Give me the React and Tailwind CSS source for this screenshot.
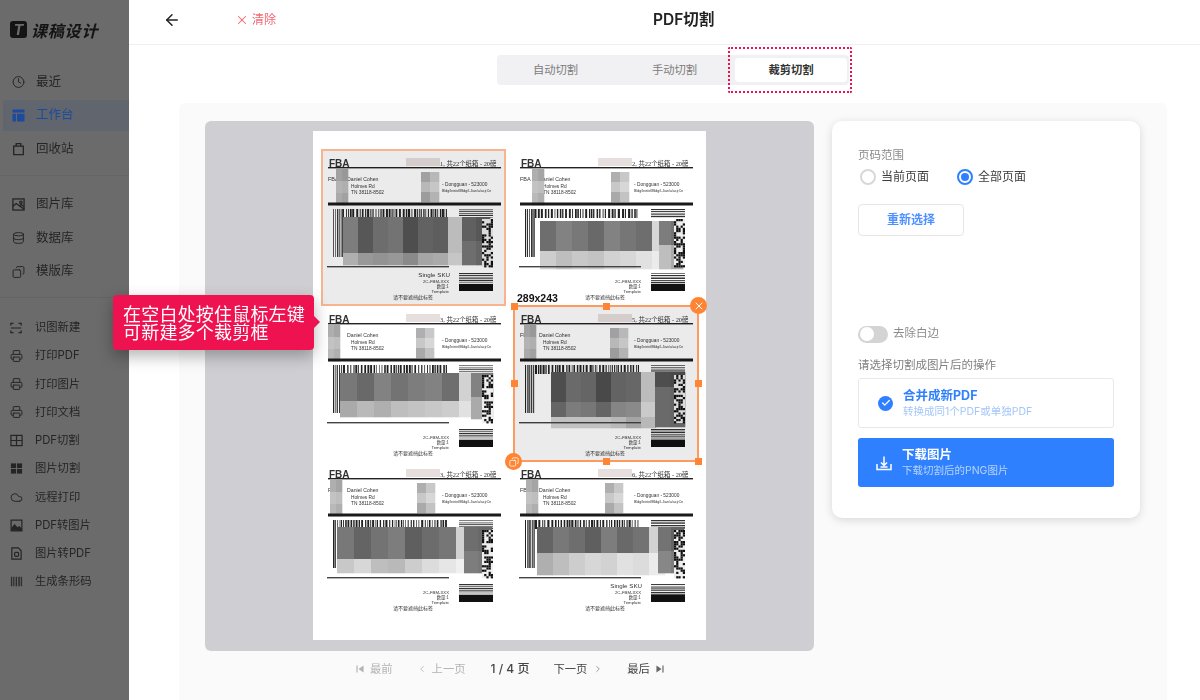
import React from "react";
import { X, ArrowLeft, Check, ChevronLeft, ChevronRight, Clock, Database, Copy, Printer, Cloud } from "lucide-react";

const FONT = "Inter, 'Noto Sans CJK SC', sans-serif";
const CJK = "'Noto Sans CJK SC', sans-serif";

function rng(seed) {
  let s = seed;
  return () => {
    s = (s * 1103515245 + 12345) & 0x7fffffff;
    return s / 0x7fffffff;
  };
}

function Stripes({ x, y, w, h, seed, min = 0.6, max = 2.2 }) {
  const r = rng(seed);
  const out = [];
  let p = x;
  while (p < x + w) {
    const a = min + r() * (max - min);
    const b = min + r() * (max - min);
    out.push(<rect key={p} x={p} y={y} width={Math.min(a, x + w - p)} height={h} fill="#222" />);
    p += a + b;
  }
  return <g>{out}</g>;
}

function HStripes({ x, y, w, h, seed }) {
  const r = rng(seed);
  const out = [];
  let p = y;
  while (p < y + h) {
    const a = 0.5 + r();
    out.push(<rect key={p} x={x} y={p} width={w} height={Math.min(a, y + h - p)} fill="#333" />);
    p += a + 0.8 + r() * 0.6;
  }
  return <g>{out}</g>;
}

function QR({ x, y, w, h, seed }) {
  const r = rng(seed);
  const out = [<rect key="bg" x={x} y={y} width={w} height={h} fill="#eee" />];
  for (let j = 0; j < h; j += 2.2) {
    for (let i = 0; i < w; i += 2.2) {
      if (r() > 0.48) out.push(<rect key={i + "-" + j} x={x + i} y={y + j} width="2.2" height="2.2" fill="#111" />);
    }
  }
  return <g>{out}</g>;
}

function Blocks({ x, y, w, rows }) {
  const out = [];
  let cy = y;
  rows.forEach((row, ri) => {
    row.c.forEach((g, ci) => {
      out.push(<rect key={ri + "-" + ci} x={x + ci * w} y={cy} width={w + 0.3} height={row.h + 0.3} fill={`rgb(${g},${g},${g})`} />);
    });
    cy += row.h;
  });
  return <g>{out}</g>;
}

const LABELS = [
  { n: 1, lx: 15, rx: 100, lead: "1, 共22个纸箱 - 20磅", bx: 22, by: 68, bw: 15,
    rows: [{ h: 36, c: [136, 95, 119, 125, 85, 107, 102, 205] }, { h: 12, c: [190, 165, 160, 165, 150, 180, 185, 215] }],
    right: [{ h: 24, c: [105, 95] }, { h: 24, c: [120, 110] }], rbx: 141, rbw: 14, sku: true },
  { n: 2, lx: 19, rx: 98, lead: "2, 共22个纸箱 - 20磅", bx: 27, by: 72, bw: 16,
    rows: [{ h: 30, c: [110, 130, 120, 105, 130, 118, 110, 215] }, { h: 18, c: [205, 190, 200, 195, 210, 215, 225, 235] }],
    right: [{ h: 24, c: [125, 115] }, { h: 24, c: [190, 170] }], rbx: 146, rbw: 12 },
  { n: 3, lx: 7, rx: 95, lead: "3, 共22个纸箱 - 20磅", bx: 19, by: 68, bw: 17,
    rows: [{ h: 28, c: [120, 105, 130, 115, 125, 130, 110, 210] }, { h: 16, c: [170, 185, 175, 190, 195, 200, 205, 225] }],
    right: [{ h: 24, c: [130, 120] }, { h: 22, c: [170, 190] }], rbx: 150, rbw: 11 },
  { n: 5, lx: 11, rx: 97, lead: "5, 共22个纸箱 - 20磅", bx: 38, by: 67, bw: 15,
    rows: [{ h: 30, c: [85, 115, 110, 80, 108, 112, 205] }, { h: 15, c: [110, 135, 130, 110, 145, 150, 220] }, { h: 11, c: [210, 210, 210, 210, 200, 180, 200] }],
    right: [{ h: 15, c: [85, 80] }, { h: 40, c: [115, 110] }], rbx: 142, rbw: 15 },
  { n: 3, lx: 9, rx: 96, lead: "3, 共22个纸箱 - 20磅", bx: 16, by: 67, bw: 17,
    rows: [{ h: 32, c: [120, 100, 115, 125, 95, 108, 118, 210] }, { h: 14, c: [200, 215, 190, 185, 205, 220, 230, 240] }],
    right: [{ h: 24, c: [110, 105] }, { h: 22, c: [125, 120] }], rbx: 143, rbw: 14 },
  { n: 6, lx: 13, rx: 92, lead: "6, 共22个纸箱 - 20磅", bx: 24, by: 67, bw: 16,
    rows: [{ h: 26, c: [100, 120, 110, 95, 125, 105, 115, 210] }, { h: 22, c: [175, 190, 205, 215, 210, 225, 220, 235] }],
    right: [{ h: 24, c: [115, 100] }, { h: 22, c: [135, 125] }], rbx: 145, rbw: 13, sku: true },
];

function ShippingLabel({ d, seed }) {
  const t = { fontFamily: CJK, fill: "#333" };
  const s = { fontFamily: "'Liberation Serif', 'Noto Sans CJK SC', serif", fill: "#333" };
  const a = { fontFamily: "'Liberation Sans', sans-serif", fill: "#333" };
  return (
    <svg width="185" height="156" viewBox="0 0 185 156" className="block blur-[0.45px]">
      <text x="8" y="17.5" fontSize="10" fontWeight="700" {...a}>FBA</text>
      <rect x="7" y="18" width="173" height="1.4" fill="#222" />
      <rect x="85" y="9" width="34" height="8" fill="#e6dfdd" />
      <text x="119" y="16.5" fontSize="6.4" {...s}>{d.lead}</text>
      <text x="7" y="32" fontSize="5.5" {...a}>FBA</text>
      <text x="26" y="32" fontSize="5.2" {...a}>Daniel Cohen</text>
      <text x="30" y="39" fontSize="4.8" {...a}>Holmes Rd</text>
      <text x="30" y="45" fontSize="4.8" {...a}>TN 38118-8502</text>
      <text x="121" y="37" fontSize="4.8" {...a}>- Dongguan - 523000</text>
      <text x="121" y="42.5" fontSize="3.6" {...a}>Bldg/leistellBldg/LJian/a/acjrCn</text>
      <Blocks x={d.lx} y={20} w={6} rows={[{ h: 12, c: [175, 165] }, { h: 12, c: [195, 190] }, { h: 12, c: [185, 175] }]} />
      <Blocks x={d.rx} y={23} w={9} rows={[{ h: 10, c: [175, 200] }, { h: 10, c: [200, 215] }, { h: 10, c: [170, 195] }]} />
      <rect x="7" y="53.5" width="173" height="3" fill="#1a1a1a" />
      <Stripes x={12} y={60} w={10} h={48} seed={d.n * 7 + seed} min={0.6} max={1.6} />
      <Stripes x={22} y={60} w={104} h={9} seed={d.n * 13 + seed} />
      <HStripes x={138} y={60} w={34} h={9} seed={d.n * 3 + 1} />
      <Blocks x={d.bx} y={d.by} w={d.bw} rows={d.rows} />
      <Blocks x={d.rbx} y={d.by} w={d.rbw} rows={d.right} />
      <QR x={161} y={70} w={11} h={48} seed={d.n * 17 + 5} />
      <rect x="6" y="117" width="122" height="1.4" fill="#444" />
      {d.sku && <text x="129" y="128" fontSize="6.2" textAnchor="end" {...a}>Single SKU</text>}
      <text x="128" y="134" fontSize="4.3" textAnchor="end" {...a}>2C-FBM-XXX</text>
      <text x="128" y="139" fontSize="4.3" textAnchor="end" {...t}>数量:1</text>
      <text x="128" y="143.5" fontSize="4.3" textAnchor="end" {...a}>Template</text>
      <HStripes x={138} y={124} w={34} h={11} seed={d.n * 5 + 2} />
      <rect x="138" y="135" width="34" height="7" fill="#111" />
      <text x="92" y="149.5" fontSize="5" textAnchor="middle" {...t}>请不要遮挡此标签</text>
    </svg>
  );
}

function LayoutIcon({ className }) {
  return (
    <svg viewBox="0 0 13 13" className={className} fill="currentColor">
      <rect x="0.5" y="0.5" width="12" height="3" />
      <rect x="0.5" y="4.8" width="3.4" height="7.7" />
      <rect x="5" y="4.8" width="7.5" height="7.7" />
    </svg>
  );
}
function BagIcon({ className }) {
  return (
    <svg viewBox="0 0 14 14" className={className} fill="none" stroke="currentColor" strokeWidth="1.4">
      <path d="M1.8 4h10.4v9H1.8z" />
      <path d="M4.5 4V1.2h5V4" />
    </svg>
  );
}
function GalleryIcon({ className }) {
  return (
    <svg viewBox="0 0 14 14" className={className} fill="none" stroke="currentColor" strokeWidth="1.4">
      <rect x="1" y="1" width="12" height="12" />
      <path d="M1 9l3.5-3L13 12" />
      <circle cx="9.6" cy="4.6" r="1.3" />
      <path d="M8 8.5l2-1.5 3 2.5" />
    </svg>
  );
}
function ScanIcon({ className }) {
  return (
    <svg viewBox="0 0 14 14" className={className} fill="none" stroke="currentColor" strokeWidth="1.4">
      <path d="M1 4V1.7h3M10 1.7h3V4M1 10v2.3h3M10 12.3h3V10M1 7h12" />
    </svg>
  );
}
function TableIcon({ className }) {
  return (
    <svg viewBox="0 0 14 14" className={className} fill="none" stroke="currentColor" strokeWidth="1.3">
      <rect x="1" y="1.5" width="12" height="11" />
      <path d="M1 7h12M7 1.5v11" />
    </svg>
  );
}
function TilesIcon({ className }) {
  return (
    <svg viewBox="0 0 14 14" className={className} fill="currentColor">
      <rect x="1" y="1.5" width="5.5" height="5" />
      <rect x="7.5" y="1.5" width="5.5" height="5" />
      <rect x="1" y="7.5" width="5.5" height="5" />
      <rect x="7.5" y="7.5" width="5.5" height="5" />
    </svg>
  );
}
function PhotoIcon({ className }) {
  return (
    <svg viewBox="0 0 14 14" className={className}>
      <rect x="1.2" y="1.2" width="11.6" height="11.6" fill="none" stroke="currentColor" strokeWidth="1.3" />
      <path d="M1.5 12.5V9.5l3.5-4 3 3.5 2-1.5 3 3v2.5z" fill="currentColor" />
    </svg>
  );
}
function FileIcon({ className }) {
  return (
    <svg viewBox="0 0 14 14" className={className} fill="none" stroke="currentColor" strokeWidth="1.3">
      <path d="M2 1h7l3 3v9H2z" />
      <rect x="5" y="5.8" width="4.2" height="4.2" rx="1" />
    </svg>
  );
}
function BarcodeIcon({ className }) {
  return (
    <svg viewBox="0 0 14 14" className={className} fill="currentColor">
      <path d="M1 2h1v10H1zM3 2h1v10H3zM5 2h.7v10H5zM6.6 2h1v10h-1zM8.6 2h.7v10h-.7zM10 2h1v10h-1zM12 2h1v10h-1z" />
    </svg>
  );
}
function SkipIcon({ className, flip }) {
  return (
    <svg viewBox="0 0 9 9" className={className} fill="currentColor" style={flip ? { transform: "scaleX(-1)" } : undefined}>
      <rect x="0.5" y="0.5" width="1.3" height="8" />
      <path d="M8.5 0.5v8L2.8 4.5z" />
    </svg>
  );
}
function DownloadIcon({ className }) {
  return (
    <svg viewBox="0 0 16 16" className={className} fill="none" stroke="currentColor" strokeWidth="1.5">
      <path d="M1 9v5.5h14V9" />
      <path d="M8 1.5v8.5M5 7.5L8 10.5l3-3" />
      <path d="M4.5 12h7" />
    </svg>
  );
}

const TOP = [
  { icon: <Clock className="size-[14px]" strokeWidth={1.8} />, t: "最近" },
  { icon: <LayoutIcon className="size-[13px]" />, t: "工作台", active: true },
  { icon: <BagIcon className="size-[14px]" />, t: "回收站" },
];
const MID = [
  { icon: <GalleryIcon className="size-[13px]" />, t: "图片库" },
  { icon: <Database className="size-[14px]" strokeWidth={1.8} />, t: "数据库" },
  { icon: <Copy className="size-[14px] -scale-x-100" strokeWidth={1.8} />, t: "模版库" },
];
const TOOLS = [
  { icon: <ScanIcon className="size-[12px]" />, t: "识图新建" },
  { icon: <Printer className="size-[14px]" strokeWidth={1.8} />, t: "打印PDF" },
  { icon: <Printer className="size-[14px]" strokeWidth={1.8} />, t: "打印图片" },
  { icon: <Printer className="size-[14px]" strokeWidth={1.8} />, t: "打印文档" },
  { icon: <TableIcon className="size-[13px]" />, t: "PDF切割" },
  { icon: <TilesIcon className="size-[13px]" />, t: "图片切割" },
  { icon: <Cloud className="size-[15px]" strokeWidth={1.8} />, t: "远程打印" },
  { icon: <PhotoIcon className="size-[13px]" />, t: "PDF转图片" },
  { icon: <FileIcon className="size-[13px]" />, t: "图片转PDF" },
  { icon: <BarcodeIcon className="size-[13px]" />, t: "生成条形码" },
];

function NavItem({ icon, t, active }) {
  return (
    <div className="h-[33.5px] py-[1.25px] pl-[3px] text-[12.5px]">
      <div className={"flex h-[31px] items-center rounded-l-[3px] pl-[9px] " + (active ? "bg-[#60656e] text-[#1c4a9c]" : "text-[#252525]")}>
        <span className="flex w-[13px] justify-center">{icon}</span>
        <span className="ml-[11px]">{t}</span>
      </div>
    </div>
  );
}

function ToolItem({ icon, t }) {
  return (
    <div className="flex h-[28.25px] items-center pl-[9.5px] text-[11.3px] text-[#252525]">
      <span className="flex w-[13px] justify-center">{icon}</span>
      <span className="ml-[12.5px]">{t}</span>
    </div>
  );
}

function Handle({ className }) {
  return <span className={"absolute size-[7px] bg-[#ff8433] " + className} />;
}

export default function App() {
  return (
    <div className="relative flex h-[700px] w-[1200px] overflow-hidden bg-white" style={{ fontFamily: FONT }}>
      <aside className="flex w-[129px] shrink-0 flex-col bg-[#6b6b6b] blur-[0.3px]">
        <div className="flex h-[65.5px] items-start pl-[10px] pt-[21px]">
          <span className="flex size-[17px] items-center justify-center rounded-[3px] bg-[#141414] text-[15px] font-bold italic leading-none text-[#6b6b6b]">T</span>
          <span className="ml-[4px] text-[16px] font-bold italic leading-[18px] tracking-[0.8px] text-[#141414]" style={{ fontFamily: CJK }}>课稿设计</span>
        </div>
        {TOP.map((x) => <NavItem key={x.t} {...x} />)}
        <div className="mt-[8.5px] h-px bg-[#646464]" />
        <div className="mt-[12.5px]">{MID.map((x) => <NavItem key={x.t} {...x} />)}</div>
        <div className="mt-[8.5px] h-px bg-[#646464]" />
        <div className="mt-[15.5px]">{TOOLS.map((x) => <ToolItem key={x.t} {...x} />)}</div>
      </aside>

      <main className="flex min-w-0 flex-1 flex-col blur-[0.3px]">
        <header className="flex h-[45px] shrink-0 items-center border-b border-[#efefef] pb-[4px]">
          <ArrowLeft className="ml-[34px] size-[18px] text-[#222]" strokeWidth={2} />
          <span className="ml-[54px] flex items-center text-[12px] text-[#f4656f]">
            <X className="size-[14px]" strokeWidth={1.8} />
            <span className="ml-[3px]">清除</span>
          </span>
          <h1 className="ml-[377px] text-[15.5px] font-semibold text-[#222]">PDF切割</h1>
        </header>

        <div className="relative ml-[368px] mt-[10px] flex h-[30px] w-[352px] shrink-0 items-center rounded-[4px] bg-[#f1f1f3] text-[11.3px] text-[#7c7c7c]">
          <span className="w-[117px] text-center">自动切割</span>
          <span className="w-[121px] text-center">手动切割</span>
          <span className="flex h-[24px] w-[112px] items-center justify-center rounded-[4px] bg-white font-bold text-[#333]">裁剪切割</span>
        </div>

        <section className="ml-[50px] mt-[18px] flex min-h-0 w-[988px] flex-1 gap-[18px] rounded-t-[6px] bg-[#fafafa] pl-[26px] pt-[18px]">
          <div className="w-[609px] shrink-0">
            <div className="flex h-[530px] justify-center rounded-[6px] bg-[#cfcfd3] pt-[10px]">
              <div className="relative h-[509px] w-[393px] bg-white pl-[8px] pt-[18px]">
                <div className="grid grid-cols-[192px_185px] grid-rows-[156px_155px_156px]">
                  {LABELS.map((d, i) => <ShippingLabel key={i} d={d} seed={i * 11 + 3} />)}
                </div>

                <div className="absolute left-[8px] top-[18px] h-[157px] w-[185px] border-2 border-[#f8b48f] bg-black/8 bg-clip-padding" />

                <span className="absolute left-[204px] top-[161px] text-[10.5px] font-bold leading-[13px] text-[#111]" style={{ fontFamily: "'Liberation Sans', sans-serif" }}>289x243</span>
                <div className="absolute left-[200px] top-[174px] h-[157px] w-[186px] border-2 border-[#ff9a5e] bg-black/8 bg-clip-padding">
                  <Handle className="-left-[4.5px] -top-[4.5px]" />
                  <Handle className="left-[88px] -top-[4.5px]" />
                  <Handle className="-left-[4.5px] top-[73px]" />
                  <Handle className="-right-[4.5px] top-[73px]" />
                  <Handle className="left-[88px] -bottom-[4.5px]" />
                  <Handle className="-right-[4.5px] -bottom-[4.5px]" />
                  <span className="absolute -right-[10px] -top-[10px] flex size-[17px] items-center justify-center rounded-full bg-[#ff8433] text-white">
                    <X className="size-[12px]" strokeWidth={2} />
                  </span>
                  <span className="absolute -bottom-[10px] -left-[10px] flex size-[17px] items-center justify-center rounded-full bg-[#ff8433] text-white">
                    <Copy className="size-[10px] -scale-x-100" strokeWidth={1.8} />
                  </span>
                </div>
              </div>
            </div>

            <nav className="flex h-[36px] items-center pl-[151px] text-[11.3px] text-[#b3b3b3]">
              <SkipIcon className="size-[8px]" />
              <span className="ml-[6px]">最前</span>
              <ChevronLeft className="ml-[24px] size-[10px]" strokeWidth={2} />
              <span className="ml-[5px]">上一页</span>
              <span className="ml-[25px] text-[12px] font-medium text-[#444]">1 / 4 页</span>
              <span className="ml-[24px] text-[#444]">下一页</span>
              <ChevronRight className="ml-[6px] size-[10px] text-[#888]" strokeWidth={2} />
              <span className="ml-[24px] text-[#444]">最后</span>
              <SkipIcon className="ml-[6px] size-[8px] text-[#666]" flip />
            </nav>
          </div>

          <div className="flex h-[397px] w-[308px] flex-col rounded-[10px] bg-white pl-[26px] pt-[27px] shadow-[0_2px_10px_rgba(0,0,0,0.14)]">
            <p className="text-[11.5px] leading-[14px] text-[#8a8a8a]">页码范围</p>
            <div className="mt-[5px] flex h-[20px] items-center text-[12px] text-[#3c3c3c]">
              <span className="ml-[2px] size-[16px] rounded-full border-2 border-[#d8d8d8]" />
              <span className="ml-[5px]">当前页面</span>
              <span className="ml-[28px] flex size-[16px] items-center justify-center rounded-full border-2 border-[#2f80ff]">
                <span className="size-[8px] rounded-full bg-[#2f80ff]" />
              </span>
              <span className="ml-[5px]">全部页面</span>
            </div>
            <button className="mt-[17px] h-[32px] w-[106px] rounded-[4px] border border-[#e6e6e6] text-[12px] font-semibold text-[#4d90ff]">重新选择</button>

            <div className="mt-[89px] flex h-[18px] items-center">
              <span className="flex h-[17px] w-[30px] items-center rounded-full bg-[#d4d4d4] pl-[1.5px]">
                <span className="size-[14px] rounded-full bg-white" />
              </span>
              <span className="ml-[5px] text-[11.5px] text-[#8a8a8a]">去除白边</span>
            </div>
            <p className="mt-[15px] text-[11.5px] leading-[14px] text-[#808080]">请选择切割成图片后的操作</p>

            <div className="mt-[6px] flex h-[50px] w-[256px] items-center rounded-[3px] border border-[#e8e8e8] pl-[19px]">
              <span className="flex size-[15px] items-center justify-center rounded-full bg-[#2f80ff] text-white">
                <Check className="size-[10px]" strokeWidth={3} />
              </span>
              <div className="ml-[10px]">
                <p className="text-[12.5px] font-bold leading-[17px] text-[#2f80ff]">合并成新PDF</p>
                <p className="text-[10.5px] leading-[16px] text-[#a3c6fa]">转换成同1个PDF或单独PDF</p>
              </div>
            </div>
            <div className="mt-[10px] flex h-[49px] w-[256px] items-center rounded-[3px] bg-[#2f80ff] pl-[18px] text-white">
              <DownloadIcon className="size-[16px]" />
              <div className="ml-[10px]">
                <p className="text-[12.5px] font-bold leading-[17px]">下载图片</p>
                <p className="text-[10.5px] leading-[16px] text-[#b7d3fd]">下载切割后的PNG图片</p>
              </div>
            </div>
          </div>
        </section>
      </main>

      <div className="absolute left-[728px] top-[47px] h-[46px] w-[124px] rounded-[2px] border-2 border-dotted border-[#f01050]" />

      <div className="absolute left-[113px] top-[295px] h-[55px] w-[201px] rounded-[4px] bg-[#ee1350] pl-[10px] pt-[9px] text-[18px] leading-[18px] tracking-[0.2px] text-white shadow-[0_6px_16px_rgba(0,0,0,0.3)]" style={{ fontFamily: CJK }}>
        <p>在空白处按住鼠标左键<br />可新建多个裁剪框</p>
        <span className="absolute -right-[6px] top-[21px] size-0 border-y-[6px] border-l-[6px] border-y-transparent border-l-[#ee1350]" />
      </div>
    </div>
  );
}
